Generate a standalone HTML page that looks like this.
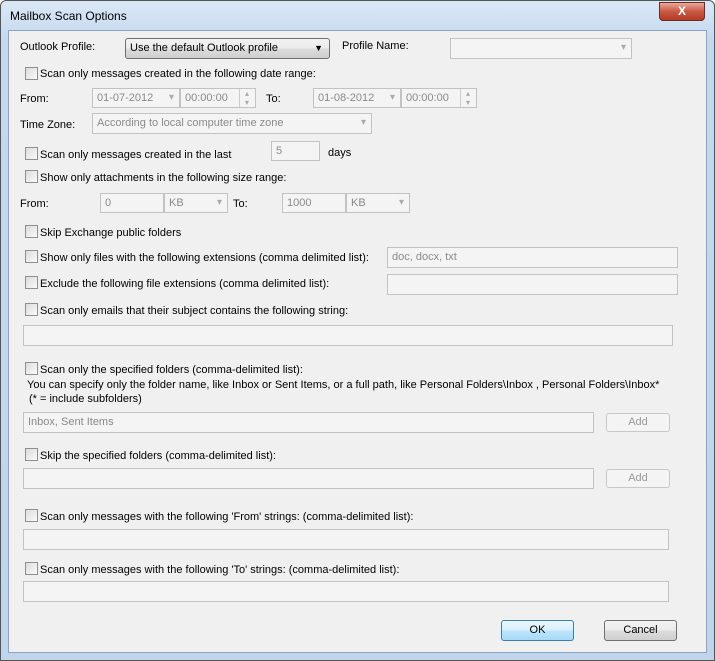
<!DOCTYPE html>
<html><head><style>
*{box-sizing:border-box;margin:0;padding:0}
body{width:715px;height:661px;position:relative;overflow:hidden;font-family:"Liberation Sans",sans-serif;font-size:11px;color:#000;background:#fff}
.frame{position:absolute;left:0;top:0;width:715px;height:661px;background:linear-gradient(#dbe8f6,#c4d8ee 40px,#c0d5ec);border:1px solid #555;border-radius:6px 6px 0 0}
.content{position:absolute;left:8px;top:30px;width:699px;height:623px;background:#f0f0f0;border:1px solid #8ba4c2}
.a{position:absolute;white-space:nowrap}
.cb{position:absolute;width:13px;height:13px;border:1px solid #8e8f8f;background:linear-gradient(135deg,#dcdcdc,#fafafa)}
.in{position:absolute;border:1px solid #c2c2c2;background:#f4f4f4;color:#8a8a8a;padding:3px 4px;font-size:11px}
.dd::after{content:"▾";position:absolute;right:5px;top:3px;color:#aaa;font-size:10px}
.sp::after{content:"▴\A▾";white-space:pre;position:absolute;right:1px;top:0px;width:14px;height:18px;border-left:1px solid #ccc;color:#aaa;font-size:8px;line-height:9px;text-align:center}
.btn{position:absolute;border:1px solid #707070;border-radius:3px;background:linear-gradient(#f2f2f2,#ebebeb 50%,#dddddd 50%,#cfcfcf);text-align:center;line-height:19px}
.dis{position:absolute;border:1px solid #c8c8c8;border-radius:3px;background:#f4f4f4;color:#999;text-align:center;line-height:17px}
</style></head><body>
<div class="frame"></div>
<div class="a" style="left:10px;top:9px;font-size:12px">Mailbox Scan Options</div>
<div class="a" style="left:659px;top:2px;width:46px;height:19px;border:1px solid #6b2b24;border-radius:0 0 4px 4px;background:linear-gradient(#e9a99c,#c75a45 50%,#b53a22);color:#fff;text-align:center;font-weight:bold;font-size:12px;line-height:17px">X</div>
<div class="content"></div>

<div class="a" style="left:20px;top:41px">Outlook Profile:</div>
<div class="btn" style="left:125px;top:38px;width:205px;height:21px;text-align:left;padding-left:4px">Use the default Outlook profile<span style="position:absolute;right:6px;font-size:9px">▼</span></div>
<div class="a" style="left:342px;top:40px">Profile Name:</div>
<div class="in dd" style="left:450px;top:38px;width:182px;height:21px"></div>

<div class="cb" style="left:25px;top:67px"></div><div class="a" style="left:40px;top:68px">Scan only messages created in the following date range:</div>
<div class="a" style="left:20px;top:93px">From:</div>
<div class="in dd" style="left:92px;top:88px;width:88px;height:20px">01-07-2012</div>
<div class="in sp" style="left:180px;top:88px;width:76px;height:20px">00:00:00</div>
<div class="a" style="left:266px;top:93px">To:</div>
<div class="in dd" style="left:313px;top:88px;width:88px;height:20px">01-08-2012</div>
<div class="in sp" style="left:401px;top:88px;width:76px;height:20px">00:00:00</div>
<div class="a" style="left:20px;top:119px">Time Zone:</div>
<div class="in dd" style="left:92px;top:113px;width:280px;height:21px">According to local computer time zone</div>

<div class="cb" style="left:25px;top:147px"></div><div class="a" style="left:40px;top:149px">Scan only messages created in the last</div>
<div class="in" style="left:271px;top:141px;width:49px;height:20px">5</div>
<div class="a" style="left:328px;top:147px">days</div>
<div class="cb" style="left:25px;top:170px"></div><div class="a" style="left:40px;top:172px">Show only attachments in the following size range:</div>
<div class="a" style="left:20px;top:198px">From:</div>
<div class="in" style="left:100px;top:193px;width:64px;height:20px">0</div>
<div class="in dd" style="left:164px;top:193px;width:64px;height:20px">KB</div>
<div class="a" style="left:233px;top:198px">To:</div>
<div class="in" style="left:282px;top:193px;width:64px;height:20px">1000</div>
<div class="in dd" style="left:346px;top:193px;width:64px;height:20px">KB</div>

<div class="cb" style="left:25px;top:225px"></div><div class="a" style="left:40px;top:227px">Skip Exchange public folders</div>
<div class="cb" style="left:25px;top:250px"></div><div class="a" style="left:40px;top:252px">Show only files with the following extensions (comma delimited list):</div>
<div class="in" style="left:387px;top:247px;width:291px;height:21px">doc, docx, txt</div>
<div class="cb" style="left:25px;top:276px"></div><div class="a" style="left:40px;top:278px">Exclude the following file extensions (comma delimited list):</div>
<div class="in" style="left:387px;top:274px;width:291px;height:21px"></div>
<div class="cb" style="left:25px;top:303px"></div><div class="a" style="left:40px;top:305px">Scan only emails that their subject contains the following string:</div>
<div class="in" style="left:23px;top:325px;width:650px;height:21px"></div>

<div class="cb" style="left:25px;top:362px"></div><div class="a" style="left:40px;top:364px">Scan only the specified folders (comma-delimited list):</div>
<div class="a" style="left:27px;top:379px">You can specify only the folder name, like Inbox or Sent Items, or a full path, like Personal Folders\Inbox , Personal Folders\Inbox*</div>
<div class="a" style="left:29px;top:393px">(* = include subfolders)</div>
<div class="in" style="left:23px;top:412px;width:571px;height:21px">Inbox, Sent Items</div>
<div class="dis" style="left:606px;top:413px;width:64px;height:19px">Add</div>
<div class="cb" style="left:25px;top:448px"></div><div class="a" style="left:40px;top:450px">Skip the specified folders (comma-delimited list):</div>
<div class="in" style="left:23px;top:468px;width:571px;height:21px"></div>
<div class="dis" style="left:606px;top:469px;width:64px;height:19px">Add</div>
<div class="cb" style="left:25px;top:509px"></div><div class="a" style="left:40px;top:511px">Scan only messages with the following 'From' strings: (comma-delimited list):</div>
<div class="in" style="left:23px;top:529px;width:646px;height:21px"></div>
<div class="cb" style="left:25px;top:562px"></div><div class="a" style="left:40px;top:564px">Scan only messages with the following 'To' strings: (comma-delimited list):</div>
<div class="in" style="left:23px;top:581px;width:646px;height:21px"></div>

<div class="btn" style="left:501px;top:620px;width:73px;height:21px;border-color:#3c7fb1;background:linear-gradient(#eaf6fd,#d9f0fc 50%,#bee6fd 50%,#a7d9f5)">OK</div>
<div class="btn" style="left:604px;top:620px;width:73px;height:21px">Cancel</div>
</body></html>
